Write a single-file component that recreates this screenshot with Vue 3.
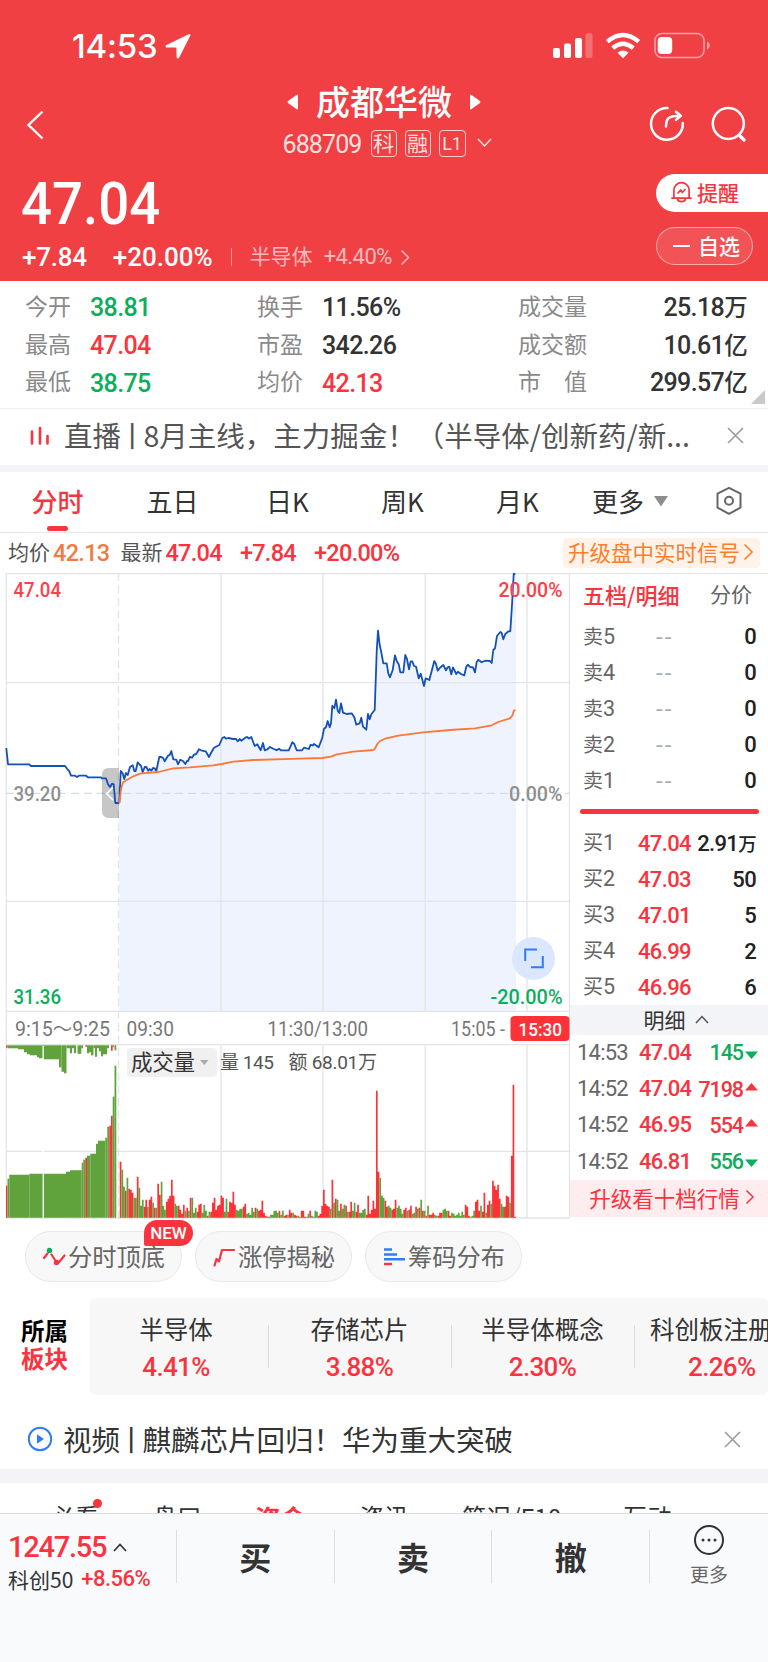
<template>
  <div class="page">
    <header class="top">
      <div class="status">
        <span class="clock">14:53</span>
        <svg class="location" width="26" height="26" viewBox="0 0 26 26">
          <path d="M24 1.700 1.800 12.600h-.3c-.6.5-.2 1.400.4 1.400h10.100l.2 10c.2 1 1 1.200 1.500.3L24.800 2.200c.2-.5-.3-.8-.8-.5z" fill="#fff" stroke="#fff" stroke-width="1.200" />
        </svg>
        <svg class="system" width="160" height="30" viewBox="0 0 160 30">
          <g fill="#fff">
            <rect x="0" y="17" width="7" height="10" rx="2" />
            <rect x="11" y="12.500" width="7" height="14.500" rx="2" />
            <rect x="22" y="7" width="7" height="20" rx="2" />
            <rect x="32.500" y="2" width="7" height="25" rx="2" opacity=".25" />
            <rect x="104.700" y="6" width="14.500" height="17" rx="4" />
            <path d="M154 10.500c3.600 1.500 3.600 6.500 0 8z" opacity=".5" />
            <path d="M70 27.200l-5.500-5.400q5.500-4.400 11 0z" />
          </g>
          <rect x="102" y="2.500" width="49" height="24" rx="7" fill="none" stroke="#fff" stroke-opacity=".5" stroke-width="1.600" />
          <g fill="none" stroke="#fff" stroke-width="4.300">
            <path d="M54.300 10.700q15.700-13.200 31.400 0" />
            <path d="M59.700 17q10.300-8.600 20.600 0" />
          </g>
        </svg>
      </div>

      <div class="title-bar">
        <svg class="back" width="20" height="30" viewBox="0 0 20 30">
          <path d="M16.500 1.500 2.500 15l14 13.500" fill="none" stroke="#fff" stroke-width="2.400" />
        </svg>
        <div class="title">
          <div class="name">
            <svg width="11" height="16" viewBox="0 0 11 16"><path d="M11 1.500v13Q11 16 9.500 15L1 9Q0 8 1 7l8.500-6Q11 0 11 1.500z" fill="#fff" /></svg>
            <h1>成都华微</h1>
            <svg width="11" height="16" viewBox="0 0 11 16"><path d="M0 1.500v13Q0 16 1.500 15L10 9q1-1 0-2L1.500 1Q0 0 0 1.500z" fill="#fff" /></svg>
          </div>
          <div class="code">
            <span class="num">688709</span>
            <i>科</i><i>融</i><i class="level">L1</i>
            <svg width="15" height="10" viewBox="0 0 15 10"><path d="M1 1l6.500 7L14 1" fill="none" stroke="#fff" stroke-opacity=".85" stroke-width="1.500" /></svg>
          </div>
        </div>
        <div class="actions">
          <svg width="36" height="36" viewBox="0 0 36 36" fill="none" stroke="#fff" stroke-width="2.500" stroke-linecap="round" stroke-linejoin="round">
            <path d="M18.500 2A15.900 15.900 0 1 0 33.800 17" />
            <path d="M17 20.500c0-8 2.500-10.800 13.500-10.800M27 5.800l4.800 3.900-4.800 4.200" />
          </svg>
          <svg width="36" height="36" viewBox="0 0 36 36" fill="none" stroke="#fff" stroke-width="2.500" stroke-linecap="round">
            <circle cx="17.300" cy="17.500" r="15.500" />
            <path d="M28.500 29.500l4.500 4.500" stroke-width="3.200" />
          </svg>
        </div>
      </div>

      <div class="quote">
        <div>
          <div class="price num">47.04</div>
          <div class="change">
            <b class="num">+7.84</b><b class="num pct">+20.00%</b>
            <span class="bar"></span>
            <span class="industry">半导体</span><span class="num ind-pct">+4.40%</span>
            <svg width="11" height="17" viewBox="0 0 11 17"><path d="M1.500 1.500l7 7-7 7" fill="none" stroke="#fff" stroke-opacity=".65" stroke-width="1.500" /></svg>
          </div>
        </div>
        <div class="buttons">
          <div class="remind">
            <svg width="21" height="22" viewBox="0 0 21 22" fill="none" stroke="#f8343f" stroke-width="1.700" stroke-linejoin="round" stroke-linecap="round">
              <path d="M2.900 16.500V9.200a7.600 7.600 0 0 1 15.200 0v7.300M1 17.200h19M6.500 18c.8 3.400 7.200 3.400 8 0" />
              <path d="M7 12l2.700-3 1.600 2.500L14 8.500" />
            </svg>
            提醒
          </div>
          <div class="watch"><span class="minus"></span>自选</div>
        </div>
      </div>
    </header>

    <section class="stats">
      <template v-for="s in stats" :key="s.label">
        <span class="label">{{ s.label }}</span>
        <span class="num value" :class="s.tone">{{ s.value }}<em v-if="s.unit">{{ s.unit }}</em></span>
      </template>
      <span class="corner"></span>
    </section>

    <section class="news live">
      <svg width="20" height="20" viewBox="0 0 20 20" fill="none" stroke="#f8343f" stroke-width="2.600" stroke-linecap="round">
        <path d="M2 5.500v12M10 2v15.500M17.500 10v7.500" />
      </svg>
      <span class="headline">直播<i>丨</i>8月主线，主力掘金！（半导体/创新药/新...</span>
      <svg class="close" width="17" height="17" viewBox="0 0 17 17"><path d="M1 1l15 15M16 1L1 16" stroke="#999" stroke-width="1.500" /></svg>
    </section>

    <nav class="periods">
      <span v-for="(p, i) in periods" :key="p" :class="{ active: i === 0 }">{{ p }}</span>
      <span class="more">更多<svg width="14" height="11" viewBox="0 0 14 11"><path d="M0 0h14L7 10.500z" fill="#8e8e8e" /></svg></span>
      <svg class="setting" width="28" height="30" viewBox="0 0 28 30" fill="none" stroke="#666" stroke-width="2" stroke-linejoin="round">
        <path d="M14 1.800 25.500 7.600v14L14 27.800 2.500 21.600v-14z" />
        <circle cx="14" cy="14.800" r="4" />
      </svg>
    </nav>

    <section class="summary">
      <span>均价</span><b class="num orange">42.13</b>
      <span class="latest">最新</span><b class="num red">47.04</b><b class="num red gap">+7.84</b><b class="num red gap">+20.00%</b>
      <div class="signal">升级盘中实时信号<svg width="11" height="18" viewBox="0 0 11 18"><path d="M1.500 1.500l7.500 7.500-7.500 7.500" fill="none" stroke="#fb7f2c" stroke-width="1.600" /></svg></div>
    </section>

    <section class="market">
      <svg class="chart" width="570" height="646" viewBox="0 0 570 646">
        <!-- price pane -->
        <path class="area" :d="areaPath" />
        <g class="grid">
          <path d="M6 .7H570M6 109.700H570M6 328.300H570M6 438.300H570M6 471.700H570M6 578.300H570M6 645H570" />
          <path d="M6.300 0V645M569.500 0V645" />
          <path v-for="x in [221, 323, 425.200, 527]" :key="x" :d="`M${x} 0V438M${x} 472V645`" />
          <path d="M118.500 0V645" stroke-dasharray="8 4.500" />
        </g>
        <path d="M6 220.300H569" stroke="#c9d7e4" stroke-dasharray="8 5" />
        <path d="M119 195H109q-7 0-7 7v36q0 7 7 7h10z" fill="#000" opacity=".22" />
        <path d="M113 214.500l-6.500 6 6.500 6.500" fill="none" stroke="#fff" stroke-width="1.500" />
        <polyline class="line" :points="auction" />
        <polyline class="line" :points="prices" />
        <polyline class="line average" :points="averages" />

        <g class="axis">
          <text v-for="t in axisLabels" :key="t.text" :x="t.x" :y="t.y" :textLength="t.width" lengthAdjust="spacingAndGlyphs" :class="t.tone">{{ t.text }}</text>
        </g>
        <circle cx="533.500" cy="385.500" r="21.500" fill="#dbe7fe" />
        <path d="M525.200 388v-11.500H537M531 394.300h11.800V383" fill="none" stroke="#2f7cfb" stroke-width="2" />

        <!-- time axis -->
        <rect x="510.500" y="443" width="59" height="25" rx="4" fill="#fd3239" />
        <g class="time">
          <text v-for="t in timeLabels" :key="t.text" :x="t.x" y="463" :textLength="t.width" lengthAdjust="spacingAndGlyphs" :class="t.tone">{{ t.text }}</text>
        </g>

        <!-- volume pane -->
        <path v-for="b in auctionBars" :key="b.key" :d="b.d" :fill="b.fill" />
        <path d="M43.300 473V645" stroke="#fff" stroke-width="1.400" />
        <path class="bars" :d="redBars" stroke="#fd3239" />
        <path class="bars" :d="greenBars" stroke="#60a33d" />
        <rect x="127" y="475" width="90" height="29" rx="4" fill="#f0f0f0" />
        <path d="M200 487h8.500l-4.200 5z" fill="#aaa" />
        <g class="volume-text">
          <text x="131" y="497" textLength="64" class="indicator">成交量</text>
          <text x="220" y="496" textLength="54">量 145</text>
          <text x="288.500" y="496" textLength="88.500">额 68.01万</text>
        </g>
      </svg>

      <aside class="book">
        <div class="book-tabs"><b>五档/明细</b><span>分价</span></div>
        <div v-for="n in [5, 4, 3, 2, 1]" :key="'s' + n" class="level-row">
          <span>卖<i>{{ n }}</i></span><span class="none">--</span><b class="num">0</b>
        </div>
        <div class="ratio"></div>
        <div v-for="(b, i) in bids" :key="'b' + i" class="level-row">
          <span>买<i>{{ i + 1 }}</i></span><span class="num red">{{ b.price }}</span><b class="num">{{ b.qty }}<em v-if="b.unit">{{ b.unit }}</em></b>
        </div>
        <div class="detail-head">
          明细<svg width="14" height="9" viewBox="0 0 14 9"><path d="M1 8l6-6.500L13 8" fill="none" stroke="#555" stroke-width="1.500" /></svg>
        </div>
        <div v-for="(t, i) in trades" :key="'t' + i" class="trade">
          <span class="num">{{ t.time }}</span>
          <span class="num red">{{ t.price }}</span>
          <span class="num qty" :class="t.up ? 'red' : 'green'">{{ t.qty }}</span>
          <svg width="13" height="8" viewBox="0 0 13 8" :class="t.up ? 'up' : 'down'">
            <path :d="t.up ? 'M0 7.500h13L6.500 0z' : 'M0 .5h13L6.500 8z'" fill="currentColor" />
          </svg>
        </div>
        <div class="upgrade">升级看十档行情<svg width="10" height="16" viewBox="0 0 10 16"><path d="M1.500 1.500L8 8l-6.500 6.500" fill="none" stroke="#f8343f" stroke-width="1.500" /></svg></div>
      </aside>
    </section>

    <section class="tools">
      <div class="tool">
        <svg width="24" height="22" viewBox="0 0 24 22" fill="none" stroke="#f8343f" stroke-width="2.200" stroke-linecap="round">
          <path d="M2 12l3.500-4.500M9.500 8.500l4.500 7M17 16l5.500-6.500" />
          <circle cx="7.500" cy="4.500" r="2.700" fill="#0aae5b" stroke="none" />
          <circle cx="14.500" cy="16.500" r="2.700" fill="#f8343f" stroke="none" />
        </svg>
        分时顶底
        <span class="badge">NEW</span>
      </div>
      <div class="tool">
        <svg width="24" height="22" viewBox="0 0 24 22" fill="none" stroke="#f8343f" stroke-width="2.200" stroke-linecap="round" stroke-linejoin="round">
          <path d="M2.500 19.500 4.500 13l2.500 2.500L10 4h12" />
        </svg>
        涨停揭秘
      </div>
      <div class="tool">
        <svg width="24" height="22" viewBox="0 0 24 22" fill="none" stroke-width="2.400">
          <path d="M2 3.500h8M2 8.500h13M2 13.300h21" stroke="#2f7cfb" />
          <path d="M2 18h8" stroke="#f8343f" />
        </svg>
        筹码分布
      </div>
    </section>

    <section class="sectors">
      <div class="sector-label"><span>所属</span><span class="red">板块</span></div>
      <div class="sector-list">
        <div v-for="s in sectors" :key="s.name" class="sector">
          <span>{{ s.name }}</span>
          <b class="num red">{{ s.change }}</b>
        </div>
      </div>
    </section>

    <section class="news video">
      <svg width="26" height="26" viewBox="0 0 26 26">
        <circle cx="13" cy="13" r="11.200" fill="none" stroke="#2f7cfb" stroke-width="2" />
        <path d="M10 8.300l7 4.700-7 4.700z" fill="#2f7cfb" />
      </svg>
      <span class="headline">视频<i>丨</i>麒麟芯片回归！华为重大突破</span>
      <svg class="close" width="17" height="17" viewBox="0 0 17 17"><path d="M1 1l15 15M16 1L1 16" stroke="#999" stroke-width="1.500" /></svg>
    </section>

    <nav class="content-tabs">
      <span v-for="t in contentTabs" :key="t" :class="{ active: t === '资金', dot: t === '必看' }">{{ t }}</span>
    </nav>

    <footer class="footer">
      <div class="index">
        <div class="index-value"><b class="num red">1247.55</b><svg width="14" height="9" viewBox="0 0 14 9"><path d="M1 8l6-6.500L13 8" fill="none" stroke="#333" stroke-width="1.700" /></svg></div>
        <div class="index-name">科创50<span class="num red">+8.56%</span></div>
      </div>
      <div class="trade-btn">买</div>
      <div class="trade-btn">卖</div>
      <div class="trade-btn">撤</div>
      <div class="footer-more">
        <svg width="32" height="32" viewBox="0 0 32 32">
          <circle cx="16" cy="16" r="14" fill="none" stroke="#333" stroke-width="2" />
          <g fill="#333"><circle cx="10" cy="16" r="1.500" /><circle cx="16" cy="16" r="1.500" /><circle cx="22" cy="16" r="1.500" /></g>
        </svg>
        更多
      </div>
    </footer>
  </div>
</template>

<script setup>
const stats = [
  { label: '今开', value: '38.81', tone: 'green' },
  { label: '换手', value: '11.56%' },
  { label: '成交量', value: '25.18', unit: '万', tone: 'right' },
  { label: '最高', value: '47.04', tone: 'red' },
  { label: '市盈', value: '342.26' },
  { label: '成交额', value: '10.61', unit: '亿', tone: 'right' },
  { label: '最低', value: '38.75', tone: 'green' },
  { label: '均价', value: '42.13', tone: 'red' },
  { label: '市　值', value: '299.57', unit: '亿', tone: 'right' },
];

const periods = ['分时', '五日', '日K', '周K', '月K'];

const bids = [
  { price: '47.04', qty: '2.91', unit: '万' },
  { price: '47.03', qty: '50' },
  { price: '47.01', qty: '5' },
  { price: '46.99', qty: '2' },
  { price: '46.96', qty: '6' },
];

const trades = [
  { time: '14:53', price: '47.04', qty: '145', up: false },
  { time: '14:52', price: '47.04', qty: '7198', up: true },
  { time: '14:52', price: '46.95', qty: '554', up: true },
  { time: '14:52', price: '46.81', qty: '556', up: false },
];

const sectors = [
  { name: '半导体', change: '4.41%' },
  { name: '存储芯片', change: '3.88%' },
  { name: '半导体概念', change: '2.30%' },
  { name: '科创板注册', change: '2.26%' },
];

const contentTabs = ['必看', '盘口', '资金', '资讯', '简况/F10', '互动'];

const axisLabels = [
  { text: '47.04', x: 13.5, y: 23.5, width: 47.5, tone: 'red' },
  { text: '39.20', x: 13.5, y: 227.5, width: 47.5, tone: 'gray' },
  { text: '31.36', x: 13.5, y: 430.5, width: 47.5, tone: 'green' },
  { text: '20.00%', x: 498.5, y: 23.5, width: 64, tone: 'red' },
  { text: '0.00%', x: 509, y: 227.5, width: 53.5, tone: 'gray' },
  { text: '-20.00%', x: 490.5, y: 430.5, width: 72, tone: 'green' },
];

const timeLabels = [
  { text: '9:15～9:25', x: 15, width: 95 },
  { text: '09:30', x: 126.5, width: 47.5 },
  { text: '11:30/13:00', x: 267.5, width: 100.5 },
  { text: '15:05 -', x: 451, width: 54 },
  { text: '15:30', x: 518.5, width: 43.5, tone: 'white' },
];

// Call auction, 9:15 - 9:25
const auction =
  '6.3,175 8,191.3 29,191.3 31,193 65,193 68,197 69,197.7 71,202.7 75,202.7 77,204 79,202.7 86,202.7 88,204.3 101,204.3 102,205.3 106,205.3 108,211.3 110,214 112,210.7 113.7,211.3 115.3,230 119.3,230';

const prices =
  '119.3,230 120.7,198 122.7,200.3 124.3,206 126,200 127.7,202 130,194 132.7,192.3 134.3,198 135.7,198 137.7,189.3 139.3,191.3 141,192.7 142.7,199.3 144.7,194 146.3,194 148.3,197.7 149.7,196 151.3,197.7 153,195 154.7,195.300 156.3,198 159.3,184 161.3,184 163.3,185.3 164.7,188.3 168,182.7 169.7,182 171.3,178 173.3,186.3 176.3,186.7 178,191.3 180.3,186.7 183,188 185.3,191 187,188 188,188 190,183.7 192,184.7 194,181.5 196,181.3 199,176.3 202,177.7 205.7,178.3 207.300,181 209,184 211,180 214,174.7 219.3,172 222.3,165 224.3,164 226,165.7 228.3,165 233.3,166 236,166 237.7,168.3 239.7,166 241.3,167.7 245.3,164.7 247,164 249,165.500 251.3,164 254.7,173 257.3,171.3 260.7,177.3 263,170 264.7,177.3 267,176.500 270,174 273.3,175.7 276.7,177.3 279,175.700 281,177.3 288.7,177.3 292.3,169.3 294.3,171 296.7,177.3 302,177.3 304,174.7 308.7,176 310.7,171.7 312.500,172.500 314,171 318.7,174.3 322.3,164.7 324,155.7 326,154.3 327.7,148 329.7,154.3 331,150.3 332.3,132.7 334.3,135.3 336,126.7 337.7,137.7 339.3,140 341,130.3 343,139.7 346.7,141 351.7,140.3 354.3,144.3 356.3,151.7 359.7,150.3 361.3,144.7 363,153.7 366.3,156.7 368,141 369.7,146.3 371.3,141.3 374.7,137 376.7,78.7 378,57.7 379.7,72 381.3,79.3 383.3,90.3 386.7,90.3 388.3,100.3 390,104.3 392.7,97 395,82.3 396.7,88 398.7,91.3 400.3,99.3 403.3,99.3 405.3,82 407,86 409,96.3 410.7,88.3 412.3,88.3 414,93 416,93.500 418.7,105.3 420.7,100.7 424,113 425.7,105.3 429.3,107 431.700,98 434.3,88 436,91 437.7,97.7 440,94.7 443.3,92 446,97.3 447.7,94.3 449.3,93.7 451.3,101.3 453,94.3 456.3,101 458,98.7 461,101 464.3,102.3 466.3,93.7 468,91.7 470,94 473,94.3 475,99.3 476.7,89 478.3,86.7 481.7,89.3 485,87.7 490,88 491.7,90 493.3,77 495,75.3 497,63 500.3,59 501.700,60 503.3,66.3 505.3,61 508.3,58.3 510.3,58.3 512,32 513.7,1 515.3,1';

const averages =
  '119.3,230 121.3,215.3 123,209.3 126.7,207 133.3,203.3 140,200.7 158.3,199 173.3,195.3 190,194.3 213.3,192.3 221.7,191 233.3,188.7 253.3,187 300,185.7 322.3,185 331,183.7 336.7,181.3 353.3,178.7 373.3,177 374.7,176 377.3,171 380,168 385,165.7 398.3,162.7 423.3,159.3 450,157 475,155.3 491.7,152.3 498.3,149 510,145.3 512.3,142.7 514,137.3 515.500,137.3';

const areaPath = `M${prices.split(' ').join('L')}H516V438H119.3Z`;

// Stepped blocks of the auction volume: [left, right, height, color]
const matched = [
  [6, 7.5, 32, 'r'], [7.5, 9.3, 39, 'g'], [9.3, 29.3, 43, 'g'], [29.3, 66, 44, 'g'],
  [66, 70, 46, 'g'], [70, 81.7, 47.5, 'g'], [81.7, 83.3, 55, 'g'], [83.3, 85.3, 58, 'g'],
  [85.3, 87, 60, 'r'], [87, 90.3, 62, 'g'], [90.3, 96, 64, 'g'], [96, 98, 74, 'g'],
  [98, 105.3, 77, 'g'], [105.3, 107.3, 80, 'g'], [107.3, 109.3, 91, 'g'], [109.3, 111, 92, 'r'],
  [111, 112.7, 102, 'r'], [112.7, 114.5, 121, 'g'], [114.5, 116.3, 152, 'g'],
];
const unmatched = [
  [6, 7.5, 2.5, 'r'], [7.5, 18, 3, 'g'], [18, 24, 4, 'g'], [24, 27, 7, 'g'],
  [27, 30, 9, 'g'], [30, 37, 10, 'g'], [37, 39, 12, 'g'], [39, 42.7, 13, 'g'],
  [42.7, 59, 14, 'g'], [59, 61.5, 22, 'g'], [61.5, 64, 26.5, 'g'], [64, 66.5, 28, 'g'],
  [66.5, 70, 3, 'g'], [70, 72, 8, 'g'], [72, 74, 3, 'g'], [74, 76, 8, 'g'],
  [77.5, 81.3, 8.5, 'g'], [81.3, 83, 3, 'g'], [85.3, 87, 1.5, 'r'], [87, 89, 8, 'g'],
  [89, 91, 7, 'g'], [91, 93.5, 10, 'g'], [93.5, 95, 3, 'g'], [95, 97, 11.500, 'g'],
  [97, 99, 3, 'g'], [99, 101, 6, 'g'], [101, 103, 11, 'g'], [103, 107, 9, 'g'],
  [107, 109, 3, 'g'], [111, 112.7, 5.500, 'r'], [112.7, 114, 2, 'g'], [114.5, 116.3, 5, 'g'],
];
const fills = { r: '#fd3239', g: '#60a33d' };
const auctionBars = [
  ...matched.map(([a, b, h, c], i) => ({ key: 'm' + i, d: `M${a} ${644.7 - h}H${b}V644.7H${a}z`, fill: fills[c] })),
  ...unmatched.map(([a, b, h, c], i) => ({ key: 'u' + i, d: `M${a} 472.3H${b}V${472.3 + h}H${a}z`, fill: fills[c] })),
];

// One bar per minute from 9:30
const volumes = (
  'r56 g48 g31 r27 g40 r29 r28 r25 g20 g20 r41 g30 g12 g18 r11 r18 g11 r18 r21 g15 r10 g10 r34 r23 g36 g12 g8 r16 r19 r22 ' +
  'r38 r22 g14 g12 r12 r8 r4 r13 g7 r10 g7 r20 g20 g5 g10 r6 r13 r14 g5 g13 g7 r2 g6 r6 r15 r20 r8 r12 r13 r22 ' +
  'r20 g6 g19 r6 r16 r15 r26 r13 g8 g7 g9 g9 r11 r14 g4 g5 g3 g10 g6 r10 g9 r7 r8 r17 r5 r2 r1 r1 g3 g3 ' +
  'g7 g7 g5 r7 g3 g7 r2 r3 g3 r8 r5 g5 r3 r2 g2 g1 r7 r7 r1 g1 g4 r7 g2 g1 g7 g6 r2 r4 r12 r28 ' +
  'r14 r12 r11 g9 r38 g15 r19 g18 g7 r14 g9 g13 r12 g6 r6 r16 g7 g15 r6 r13 g5 g5 g8 g9 r3 r22 r4 r8 r17 r9 ' +
  'r127 r46 g40 g22 g20 r17 r11 g12 g10 r8 r9 r18 g10 g12 g9 g4 r8 r10 g7 r8 r12 g4 g5 r11 g9 r10 g18 r7 g7 r2 ' +
  'g12 r3 r3 r5 g3 g2 r2 r5 r5 g8 g9 g7 r7 r2 g5 g4 g2 g3 g5 g2 g6 g3 r13 r11 r2 g1 g2 g7 r16 r18 ' +
  'r7 g12 r6 r25 g5 r13 r17 g14 r37 r32 r28 r33 r19 g14 g11 r11 r22 r21 g15 r62 r133 r1'
).split(' ');
const barPath = (color) =>
  volumes
    .map((v, i) => (v[0] === color ? `M${(120.6 + i * 1.708).toFixed(2)} 644.7v-${v.slice(1)}` : ''))
    .join('');
const redBars = barPath('r');
const greenBars = barPath('g');
</script>

<style>
body {
  margin: 0;
}
</style>

<style scoped>
.page {
  width: 768px;
  height: 1662px;
  overflow: hidden;
  background: #fff;
  color: #333;
  font-family: "Noto Sans CJK SC", sans-serif;
  font-size: 21px;
  line-height: 1;
  display: flex;
  flex-direction: column;
}
.page > * {
  flex-shrink: 0;
  box-sizing: border-box;
}
svg {
  display: block;
  flex-shrink: 0;
}
.num {
  font-family: Roboto, "Noto Sans CJK SC", sans-serif;
  font-weight: 500;
  letter-spacing: -0.025em;
  white-space: nowrap;
}
i,
em {
  font-style: normal;
}
.red { color: #f8343f; }
.green { color: #0aae5b; }
.orange { color: #ef7c40; }

/* header */
.top {
  height: 281px;
  background: #f04043;
  color: #fff;
}
.status {
  height: 80px;
  padding: 12px 57px 0 72px;
  display: flex;
  align-items: center;
  box-sizing: border-box;
}
.clock {
  font: 500 33px/1 Inter, sans-serif;
  letter-spacing: -0.2px;
}
.location {
  margin-left: 8px;
}
.system {
  margin-left: auto;
  margin-right: -2px;
}
.title-bar {
  height: 86px;
  padding: 0 21px 0 26px;
  display: grid;
  grid-template-columns: 150px 1fr 150px;
}
.back {
  margin-top: 30px;
}
.title {
  display: flex;
  flex-direction: column;
  align-items: center;
}
.name {
  display: flex;
  align-items: center;
  gap: 18px;
  height: 44px;
  margin-right: 5px;
}
.name h1 {
  margin: 0;
  font-size: 34px;
  font-weight: 500;
  line-height: 32px;
  padding-bottom: 2px;
}
.code {
  display: flex;
  align-items: center;
  height: 38px;
  margin-left: 1px;
  color: rgba(255, 255, 255, 0.85);
}
.code .num {
  font-size: 25px;
  font-weight: 400;
  margin-right: 9px;
  letter-spacing: -0.035em;
  padding-top: 3px;
}
.code i {
  width: 26px;
  height: 27px;
  box-sizing: border-box;
  border: 1.5px solid rgba(255, 255, 255, 0.75);
  border-radius: 4px;
  font-size: 21px;
  line-height: 23px;
  text-align: center;
  margin-right: 8px;
}
.code .level {
  width: 27px;
  font-family: Roboto, sans-serif;
  font-size: 18px;
  line-height: 25px;
  margin-right: 11px;
}
.actions {
  display: flex;
  justify-content: flex-end;
  gap: 26px;
  padding-top: 26px;
}
.quote {
  display: flex;
  justify-content: space-between;
}
.price {
  font-size: 59px;
  margin: 8px 0 0 21px;
  letter-spacing: 0;
  height: 74px;
  line-height: 60px;
  transform: scaleX(0.925);
  transform-origin: left;
}
.change {
  display: flex;
  align-items: center;
  height: 18px;
  padding-left: 22px;
}
.change b {
  font-size: 26px;
  letter-spacing: -0.01em;
}
.change .pct {
  margin-left: 26px;
  letter-spacing: 0;
}
.bar {
  width: 1px;
  height: 18px;
  background: rgba(255, 255, 255, 0.45);
  margin: 0 18px 0 18px;
}
.industry {
  color: rgba(255, 255, 255, 0.65);
  padding-bottom: 3px;
}
.ind-pct {
  color: rgba(255, 255, 255, 0.65);
  font-size: 22px;
  font-weight: 400;
  margin: 0 8px 0 11px;
}
.buttons {
  width: 112px;
  padding-top: 8px;
}
.remind,
.watch {
  height: 38px;
  box-sizing: border-box;
  display: flex;
  align-items: center;
  font-weight: 500;
  line-height: 19px;
  padding-bottom: 2px;
}
.remind {
  background: #fff;
  color: #f8343f;
  border-radius: 19px 0 0 19px;
  padding-left: 15px;
  gap: 5px;
}
.watch {
  width: 97px;
  margin-top: 15px;
  border: 1px solid rgba(255, 255, 255, 0.5);
  border-radius: 19px;
  background: rgba(255, 255, 255, 0.1);
  padding-left: 16px;
  gap: 8px;
}
.minus {
  width: 17px;
  height: 2px;
  background: #fff;
  margin-top: 2px;
}

/* stats */
.stats {
  position: relative;
  height: 128px;
  padding: 7px 21px 0 25px;
  display: grid;
  grid-template-columns: 65px 167px 65px 196px 90px 1fr;
  grid-auto-rows: 37.7px;
  align-items: center;
  border-bottom: 1.500px solid #eee;
}
.label {
  font-size: 23px;
  color: #8a8a8a;
  padding-bottom: 3px;
}
.value {
  font-size: 25px;
  padding-top: 2px;
}
.value em {
  font-size: 23.500px;
}
.right {
  text-align: right;
}
.corner {
  position: absolute;
  right: 3px;
  bottom: 4px;
  border: solid transparent;
  border-width: 0 0 14px 14px;
  border-bottom-color: #c9c9c9;
}

/* news rows */
.news {
  display: flex;
  align-items: center;
}
.headline {
  font-size: 28.500px;
  white-space: nowrap;
}
.headline i {
  margin: 0 -3px;
}
.close {
  margin-left: auto;
}
.live {
  height: 63px;
  padding: 0 24px 3px 30px;
  border-bottom: 7px solid #f3f4f8;
  color: #555;
}
.live .headline {
  margin-left: 14px;
}
.video {
  height: 88px;
  padding: 14px 27px 0 27px;
  border-bottom: 14px solid #f3f4f8;
}
.video .headline {
  margin-left: 10px;
}

/* period tabs */
.periods {
  height: 61px;
  display: flex;
  align-items: center;
  border-bottom: 1.500px solid #e6e6e6;
  padding: 0 25px 2px 0;
  font-size: 26px;
}
.periods span {
  width: 115px;
  text-align: center;
}
.periods .active {
  position: relative;
  color: #f8343f;
  font-weight: 500;
}
.periods .active::after {
  content: "";
  position: absolute;
  left: 47px;
  bottom: -17px;
  width: 21px;
  height: 5px;
  border-radius: 3px;
  background: #f8343f;
}
.periods .more {
  width: auto;
  display: flex;
  align-items: center;
  gap: 10px;
  margin-left: 17px;
}
.setting {
  margin-left: auto;
}

/* summary */
.summary {
  height: 40px;
  padding: 0 8px;
  display: flex;
  align-items: center;
  font-size: 21px;
  color: #555;
}
.summary > span {
  padding-bottom: 3px;
}
.summary .num {
  font-size: 23.500px;
  margin-left: 3px;
  letter-spacing: -0.03em;
  padding-top: 1px;
}
.summary .latest {
  margin-left: 11px;
}
.summary .gap {
  margin-left: 18px;
}
.signal {
  margin-left: auto;
  height: 30px;
  box-sizing: border-box;
  padding: 0 6px 2px 5px;
  border-radius: 4px;
  background: #fff2e9;
  color: #fb7f2c;
  display: flex;
  align-items: center;
  gap: 3px;
  font-size: 21.500px;
}

/* chart */
.market {
  display: flex;
  height: 645px;
}
.area {
  fill: #eff3fe;
}
.grid {
  fill: none;
  stroke: #e4e4e6;
  stroke-width: 1.3;
}
.line {
  fill: none;
  stroke: #1450b8;
  stroke-width: 1.8;
  stroke-linejoin: round;
}
.average {
  stroke: #fb7838;
}
.bars {
  fill: none;
  stroke-width: 1.7;
}
.axis text,
.time text,
.volume-text text {
  font-family: Roboto, "Noto Sans CJK SC", sans-serif;
  font-size: 20.500px;
  font-weight: 500;
}
.axis .red { fill: #fd3f49; }
.axis .green { fill: #0aae5b; }
.axis .gray { fill: #8f8f8f; }
.time text {
  font-size: 19.500px;
  font-weight: 400;
  fill: #777;
}
.time .white {
  fill: #fff;
  font-size: 19px;
  font-weight: 500;
}
.volume-text text {
  font-size: 19px;
  font-weight: 400;
  fill: #555;
}
.volume-text .indicator {
  font-size: 21.500px;
  fill: #333;
}

/* order book */
.book {
  width: 198px;
  box-sizing: border-box;
  border-top: 1.500px solid #e4e4e6;
  color: #666;
}
.book-tabs {
  height: 44.500px;
  box-sizing: border-box;
  padding: 0 16px 5px 13px;
  display: flex;
  align-items: center;
  justify-content: space-between;
}
.book-tabs b {
  color: #f8343f;
  font-weight: 500;
  font-size: 22px;
}
.level-row {
  display: grid;
  grid-template-columns: 55px 1fr auto;
  align-items: center;
  height: 36px;
  padding: 0 12px 0 13px;
  font-size: 20px;
}
.level-row i {
  font-family: Roboto, sans-serif;
  font-size: 21.500px;
}
.level-row .num {
  font-size: 22px;
  letter-spacing: -0.03em;
  padding-top: 1px;
}
.level-row b {
  color: #222;
}
.level-row em {
  font-size: 18.500px;
}
.none {
  padding-left: 18px;
  color: #a5b0ba;
  font-family: Roboto, sans-serif;
  font-size: 24px;
  letter-spacing: 2px;
}
.ratio {
  height: 5.500px;
  border-radius: 3px;
  background: #f8343f;
  margin: 10px 9px 11px 10px;
}
.detail-head {
  height: 30px;
  box-sizing: border-box;
  background: #f3f4f8;
  color: #333;
  display: flex;
  align-items: center;
  justify-content: center;
  gap: 9px;
  padding: 0 0 2px 14px;
}
.trade {
  display: grid;
  grid-template-columns: 62px 52px 1fr auto;
  align-items: center;
  height: 36.2px;
  padding: 0 10px 0 7px;
  font-size: 22px;
}
.trade .num {
  letter-spacing: -0.035em;
}
.trade .num:first-child {
  font-weight: 400;
}
.trade .qty {
  text-align: right;
  margin-right: 2px;
  font-size: 21.500px;
  letter-spacing: -0.05em;
}
.up { color: #f8343f; margin-top: -5px; }
.down { color: #0aae5b; margin-top: 3px; }
.upgrade {
  height: 37px;
  box-sizing: border-box;
  padding: 0 0 2px 6px;
  background: #feecee;
  color: #f8343f;
  display: flex;
  align-items: center;
  justify-content: center;
  gap: 5px;
  font-size: 21.500px;
}

/* tools */
.tools {
  display: flex;
  gap: 13px;
  padding: 13px 25px 0;
  height: 80px;
}
.tool {
  position: relative;
  width: 157px;
  height: 51px;
  box-sizing: border-box;
  border: 1px solid #e8e8e8;
  border-radius: 26px;
  background: #f8f8f8;
  color: #666;
  font-size: 24.300px;
  display: flex;
  align-items: center;
  justify-content: center;
  gap: 2px;
  white-space: nowrap;
}
.badge {
  position: absolute;
  right: -12px;
  top: -12px;
  width: 49px;
  height: 26px;
  border-radius: 13px 13px 13px 2px;
  background: #f8343f;
  color: #fff;
  font: 500 17px/27px Roboto, sans-serif;
  text-align: center;
}

/* sectors */
.sectors {
  display: flex;
  height: 97px;
}
.sector-label {
  width: 90px;
  box-sizing: border-box;
  padding: 1px 0 4px 21px;
  display: flex;
  flex-direction: column;
  justify-content: center;
  gap: 4.500px;
  font-size: 23.500px;
  font-weight: 700;
  color: #000;
}
.sector-list {
  flex: 1;
  min-width: 0;
  overflow: hidden;
  display: flex;
  background: #f7f7f7;
  border-radius: 6px;
}
.sector {
  position: relative;
  box-sizing: border-box;
  flex: 0 0 183px;
  display: flex;
  flex-direction: column;
  align-items: center;
  justify-content: center;
  gap: 12.500px;
  padding-top: 3px;
  font-size: 24.500px;
  white-space: nowrap;
}
.sector:first-child {
  flex-basis: 178px;
  padding-right: 6px;
}
.sector:last-child {
  align-items: flex-start;
  padding-left: 16px;
}
.sector:last-child b {
  margin-left: 38px;
}
.sector b {
  font-size: 26px;
}
.sector + .sector::before {
  content: "";
  position: absolute;
  left: 0;
  top: 27px;
  width: 1px;
  height: 43px;
  background: #ddd;
}

/* content tabs, half covered by the footer */
.content-tabs {
  height: 30px;
  overflow: hidden;
  padding: 21px 0 0 50px;
  display: flex;
  gap: 53.500px;
  font-size: 24.500px;
  line-height: 26px;
}
.content-tabs span {
  height: 26px;
  white-space: nowrap;
}
.content-tabs span:last-child {
  margin-left: 8px;
}
.content-tabs .active {
  color: #f8343f;
  font-weight: 700;
  font-size: 25.500px;
}
.content-tabs .dot::after {
  content: "";
  position: absolute;
  width: 9px;
  height: 9px;
  border-radius: 50%;
  background: #f8343f;
  margin: -5px 0 0 -6px;
}

/* footer */
.footer {
  height: 149px;
  border-top: 1.500px solid #dcdcde;
  background: #f9fafc;
  display: flex;
  align-items: flex-start;
  padding-top: 16px;
}
.index {
  width: 176px;
  box-sizing: border-box;
  padding: 3px 0 0 8px;
}
.index-value {
  display: flex;
  align-items: center;
  gap: 7px;
  height: 29px;
}
.index-value b {
  font-size: 29px;
  letter-spacing: -0.043em;
}
.index-name {
  display: flex;
  align-items: center;
  height: 34px;
  font-size: 21px;
}
.index-name .num {
  font-size: 22px;
  margin-left: 8px;
  letter-spacing: -0.025em;
}
.trade-btn {
  width: 157.700px;
  height: 53px;
  box-sizing: border-box;
  border-left: 1.500px solid #dedee0;
  font-size: 32px;
  font-weight: 700;
  line-height: 52px;
  text-align: center;
}
.footer-more {
  flex: 1;
  height: 53px;
  border-left: 1.500px solid #dedee0;
  display: flex;
  flex-direction: column;
  align-items: center;
  gap: 8px;
  font-size: 19px;
  color: #666;
}
.footer-more svg {
  margin-top: -6px;
}
</style>
